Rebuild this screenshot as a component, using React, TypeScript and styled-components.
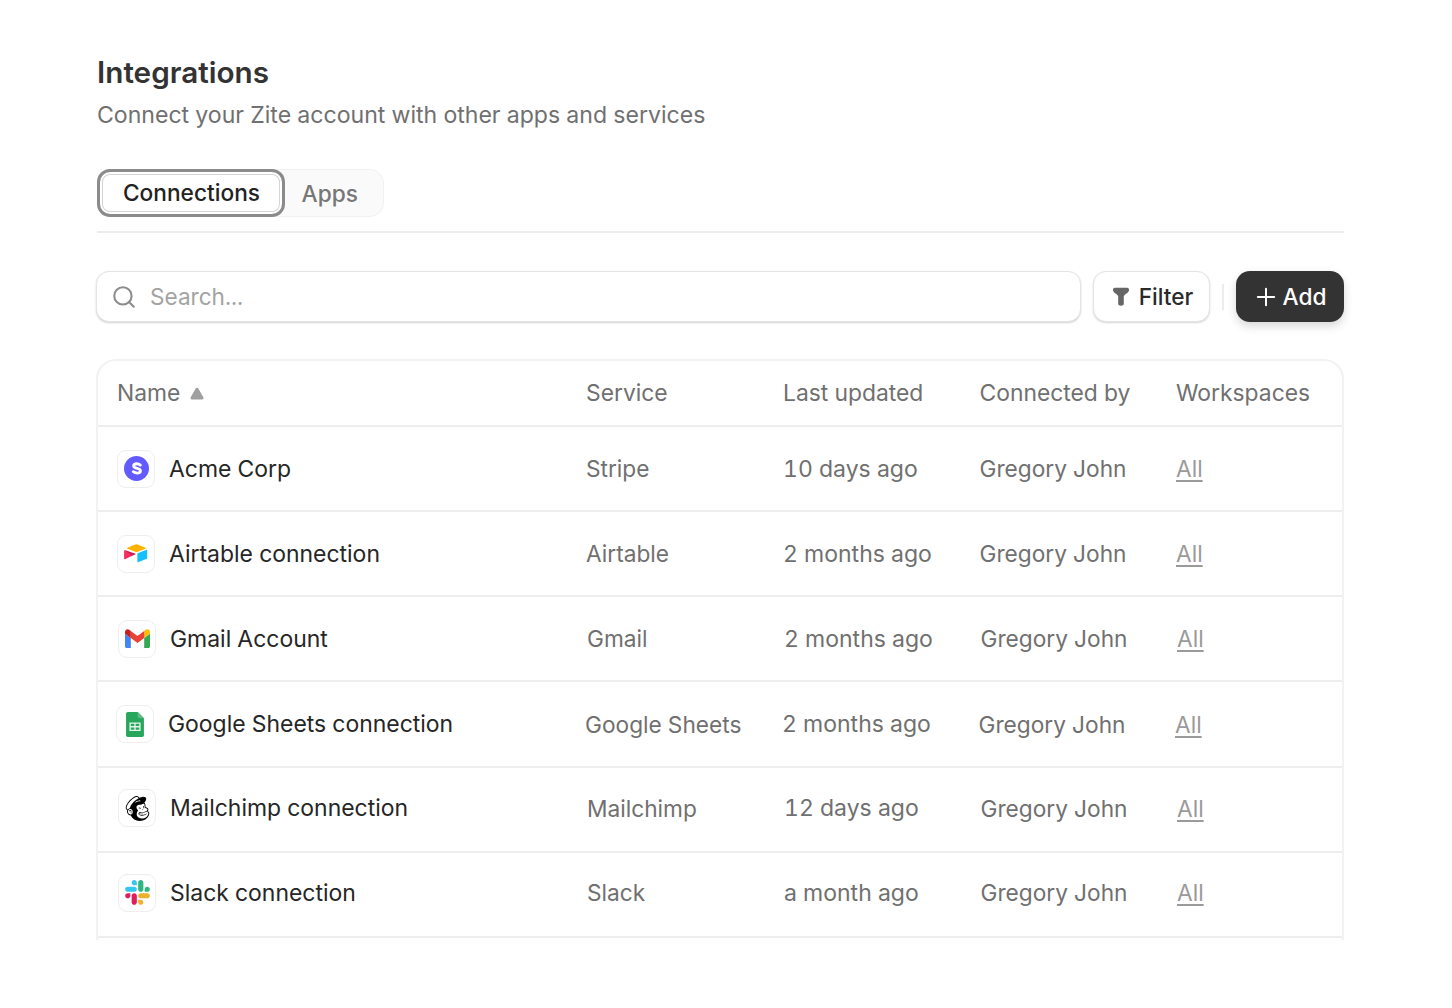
import React from 'react';
import styled, { createGlobalStyle } from 'styled-components';
import { Search, Plus } from 'lucide-react';
import { SiMailchimp } from 'react-icons/si';

const Global = createGlobalStyle`
  html, body { margin: 0; padding: 0; background: #fff; }
  body { font-family: Inter, "Liberation Sans", sans-serif; -webkit-font-smoothing: antialiased; font-variant-numeric: tabular-nums; }
`;

const Page = styled.div`
  width: 1452px; height: 1008px; box-sizing: border-box; overflow: hidden;
  padding: 53px 108px 0 97px; display: flex; flex-direction: column;
`;
const Title = styled.h1`
  margin: 0; font-size: 29.7px; line-height: 38px; font-weight: 600; color: #333;
`;
const Subtitle = styled.p`
  margin: 4px 0 0; font-size: 23.08px; line-height: 40px; font-weight: 400; color: #707070;
`;
const TabBar = styled.div`
  margin-top: 34px; padding-bottom: 14px; border-bottom: 2px solid #ececec; display: flex;
`;
const TabGroup = styled.div`
  display: flex; height: 48px; width: 287px; box-sizing: border-box;
  background: #fafafa; border: 1.5px solid #f1f1f1; border-radius: 14px;
`;
const ActiveTab = styled.div`
  width: 188px; height: 48px; margin: -1.5px 0 0 -1.5px; padding-left: 2px; flex: none; box-sizing: border-box;
  display: flex; align-items: center; justify-content: center;
  background: #fff; border: 3px solid #8b8b8b; border-radius: 13px;
  box-shadow: inset 0 0 0 2px #fff, inset 0 0 0 3px #d4d4d4;
  font-size: 22.7px; font-weight: 500; color: #222;
`;
const Tab = styled.div`
  flex: 1; display: flex; align-items: center; justify-content: center; padding-right: 8px;
  font-size: 22.7px; font-weight: 500; color: #777;
`;
const Toolbar = styled.div`
  margin: 38px 0 0 -1px; display: flex; align-items: center; height: 51px;
`;
const SearchBox = styled.div`
  flex: none; width: 985px; height: 51px; box-sizing: border-box; display: flex; align-items: center;
  gap: 13px; padding-left: 14px; background: #fff; color: #8c8c8c;
  border: 1.5px solid #e4e4e4; border-radius: 13px; box-shadow: 0 1px 2px rgba(0,0,0,.18);
`;
const Placeholder = styled.span`
  font-size: 22.6px; color: #a3a3a3;
`;
const FilterButton = styled.div`
  flex: none; margin-left: 12px; width: 117px; height: 51px; box-sizing: border-box; padding-left: 2px;
  display: flex; align-items: center; justify-content: center; gap: 9px;
  background: #fff; border: 1.5px solid #e4e4e4; border-radius: 13px; box-shadow: 0 1px 2px rgba(0,0,0,.16);
  font-size: 22.6px; font-weight: 500; color: #2a2a2a;
`;
const ToolDivider = styled.div`
  flex: none; width: 2px; height: 26px; margin: 0 12px; background: #ececec;
`;
const AddButton = styled.div`
  flex: none; width: 108px; height: 51px; box-sizing: border-box; padding-right: 2px;
  display: flex; align-items: center; justify-content: center; gap: 3px;
  background: #333; color: #fff; border-radius: 14px; box-shadow: 0 4px 10px rgba(0,0,0,.16);
  font-size: 22.7px; font-weight: 500;
`;
const Table = styled.div`
  margin: 37px 0 0 -1px; height: 581px; box-sizing: border-box; overflow: hidden;
  border: 2px solid #f2f2f2; border-bottom: none; border-radius: 20px 20px 0 0;
`;
const columns = '469px 197px 196.500px 196.500px 1fr';
const HeadRow = styled.div`
  display: grid; grid-template-columns: ${columns}; align-items: center; height: 66px; box-sizing: border-box;
  padding-left: 19px; border-bottom: 2px solid #eeeeee;
  font-size: 22.85px; color: #707070;
`;
const HeadName = styled.div`
  display: flex; align-items: center; gap: 10px;
`;
const Row = styled.div<{ $nudge: number; $height: number; $lift: number }>`
  display: grid; grid-template-columns: ${columns}; align-items: center; height: ${p => p.$height}px; box-sizing: border-box;
  padding-left: ${p => 19 + p.$nudge}px; padding-bottom: ${p => p.$lift}px; border-bottom: 2px solid #eeeeee;
  font-size: 22.7px; color: #707070;
`;
const NameCell = styled.div`
  display: flex; align-items: center; gap: 14px; font-size: 22.95px; color: #262626;
`;
const UpdatedCell = styled.div`
  font-size: 23px;
`;
const IconBox = styled.div`
  width: 38px; height: 38px; flex: none; box-sizing: border-box; display: flex; align-items: center; justify-content: center;
  background: #fff; border: 1.5px solid #eeeeee; border-radius: 9px; color: #000;
`;
const AllLink = styled.a`
  color: #9a9a9a; text-decoration: underline; text-underline-offset: 3px; text-decoration-thickness: 1.5px;
`;

const Stripe = () => (
  <svg width="25" height="25" viewBox="0 0 26 26">
    <circle cx="13" cy="13" r="13" fill="#635bff" />
    <path d="M17 9.400c-1-.8-2.400-1.300-3.800-1.300-1.800 0-3.100.9-3.100 2.300 0 3.100 7 1.800 7 5 0 1.500-1.400 2.400-3.300 2.400-1.500 0-3-.6-4.100-1.500" fill="none" stroke="#fff" strokeWidth="3" strokeLinecap="round" />
  </svg>
);
const Airtable = () => (
  <svg width="25" height="23" viewBox="0 0 28 26">
    <path d="M12.500 2.800 3.700 6.400c-.5.200-.5.900 0 1.100l8.900 3.500c.9.300 1.900.3 2.700 0l8.900-3.500c.5-.2.500-.9 0-1.100l-8.900-3.600c-.9-.4-1.900-.4-2.800 0z" fill="#fcb400" />
    <path d="M15 13.400V22.300c0 .4.400.7.800.6l9.900-3.900c.3-.1.400-.3.400-.6V9.500c0-.4-.4-.7-.8-.6l-9.900 3.900c-.2.100-.4.300-.4.600z" fill="#18bfff" />
    <path d="M12.700 13.900 9.700 15.300 1 19.500c-.4.200-1-.1-1-.6V9.900c0-.2.100-.3.200-.4l.3-.2c.2-.1.400-.1.600 0l11.500 4.100c.5.100.5.400.1.500z" fill="#f82b60" />
    <path d="M12.700 13.900 9.200 15.600 1 9.200l.1-.1 11.500 4.200c.5.200.5.500.1.600z" fill="#a51e46" opacity=".55" />
  </svg>
);
const Gmail = () => (
  <svg width="25" height="20" viewBox="0 0 28 22">
    <path d="M2 21h4.500V10L0 5.200V19c0 1.100.9 2 2 2z" fill="#4285f4" />
    <path d="M21.500 21H26c1.100 0 2-.9 2-2V5.200L21.500 10z" fill="#34a853" />
    <path d="M21.500 2v8L28 5.200V3c0-2.500-2.800-3.900-4.800-2.400z" fill="#fbbc04" />
    <path d="M6.500 10V2L14 7.600 21.500 2v8L14 15.600z" fill="#ea4335" />
    <path d="M0 3v2.200L6.500 10V2L4.800.6C2.800-.9 0 .5 0 3z" fill="#c5221f" />
  </svg>
);
const Sheets = () => (
  <svg width="18" height="25" viewBox="0 0 20 28">
    <path d="M2 0h11l7 7v19a2 2 0 0 1-2 2H2a2 2 0 0 1-2-2V2a2 2 0 0 1 2-2z" fill="#27a65c" />
    <path d="M13 0l7 7h-5a2 2 0 0 1-2-2z" fill="#5fba88" />
    <path d="M4.500 12.500h11v8h-11zM4.500 16.500h11M10 12.500v8" fill="none" stroke="#e4f4ea" strokeWidth="1.500" />
  </svg>
);
const Slack = () => (
  <svg width="25" height="25" viewBox="0 0 127 127">
    <path d="M27.200 80c0 7.300-5.900 13.200-13.200 13.200S.8 87.300.8 80s5.900-13.200 13.200-13.200h13.200V80zm6.600 0c0-7.300 5.900-13.200 13.200-13.200s13.200 5.900 13.200 13.200v33c0 7.300-5.900 13.200-13.200 13.200s-13.200-5.900-13.200-13.200V80z" fill="#E01E5A" />
    <path d="M47 27c-7.300 0-13.200-5.900-13.200-13.200S39.700.6 47 .6s13.200 5.900 13.200 13.200V27H47zm0 6.700c7.300 0 13.200 5.900 13.200 13.200s-5.900 13.200-13.200 13.200H13.900C6.600 60.100.7 54.200.7 46.900s5.900-13.200 13.200-13.200H47z" fill="#36C5F0" />
    <path d="M99.900 46.900c0-7.300 5.900-13.200 13.200-13.200s13.200 5.900 13.200 13.200-5.900 13.200-13.200 13.200H99.900V46.900zm-6.600 0c0 7.300-5.900 13.200-13.200 13.200s-13.200-5.900-13.200-13.200V13.800C66.900 6.500 72.800.6 80.100.6s13.200 5.900 13.200 13.200v33.100z" fill="#2EB67D" />
    <path d="M80.100 99.800c7.300 0 13.200 5.900 13.200 13.200s-5.900 13.200-13.200 13.200-13.200-5.900-13.200-13.200V99.800h13.200zm0-6.600c-7.300 0-13.200-5.900-13.200-13.200s5.900-13.200 13.200-13.200h33.100c7.300 0 13.200 5.900 13.200 13.200s-5.900 13.200-13.200 13.200H80.100z" fill="#ECB22E" />
  </svg>
);
const Funnel = () => (
  <svg width="18" height="19" viewBox="0 0 18 19">
    <path d="M3 .8h12c1.600 0 2.600 1.700 1.800 3.100l-1 1.600c-.4.600-1 1-1.700 1.100l-2.300 2.300v7.900c0 1.600-1.300 1.900-2.800 1.900s-2.800-.3-2.800-1.900V8.900L3.900 6.600c-.7-.1-1.300-.5-1.700-1.100l-1-1.600C.4 2.500 1.400.8 3 .8z" fill="#666" />
  </svg>
);
const SortUp = () => (
  <svg width="14" height="13" viewBox="0 0 14 13">
    <path d="M7 2.200 12 11H2z" fill="#a0a0a0" stroke="#a0a0a0" strokeWidth="3" strokeLinejoin="round" />
  </svg>
);

const rows = [
  { name: 'Acme Corp', service: 'Stripe', updated: '10 days ago', icon: <Stripe />, nudge: 0, height: 85, lift: 0 },
  { name: 'Airtable connection', service: 'Airtable', updated: '2 months ago', icon: <Airtable />, nudge: 0, height: 85, lift: 0 },
  { name: 'Gmail Account', service: 'Gmail', updated: '2 months ago', icon: <Gmail />, nudge: 1, height: 85, lift: 0 },
  { name: 'Google Sheets connection', service: 'Google Sheets', updated: '2 months ago', icon: <Sheets />, nudge: -1, height: 86, lift: 0 },
  { name: 'Mailchimp connection', service: 'Mailchimp', updated: '12 days ago', icon: <SiMailchimp size={25} />, nudge: 1, height: 85, lift: 3 },
  { name: 'Slack connection', service: 'Slack', updated: 'a month ago', icon: <Slack />, nudge: 1, height: 85, lift: 4 },
];

export default function App() {
  return (
    <Page>
      <Global />
      <Title>Integrations</Title>
      <Subtitle>Connect your Zite account with other apps and services</Subtitle>
      <TabBar>
        <TabGroup>
          <ActiveTab>Connections</ActiveTab>
          <Tab>Apps</Tab>
        </TabGroup>
      </TabBar>
      <Toolbar>
        <SearchBox>
          <Search size={26} strokeWidth={1.9} />
          <Placeholder>Search...</Placeholder>
        </SearchBox>
        <FilterButton><Funnel />Filter</FilterButton>
        <ToolDivider />
        <AddButton><Plus size={28} strokeWidth={1.7} />Add</AddButton>
      </Toolbar>
      <Table>
        <HeadRow>
          <HeadName>Name <SortUp /></HeadName>
          <div>Service</div>
          <div>Last updated</div>
          <div>Connected by</div>
          <div>Workspaces</div>
        </HeadRow>
        {rows.map(r => (
          <Row key={r.name} $nudge={r.nudge} $height={r.height} $lift={r.lift}>
            <NameCell><IconBox>{r.icon}</IconBox>{r.name}</NameCell>
            <div>{r.service}</div>
            <UpdatedCell>{r.updated}</UpdatedCell>
            <div>Gregory John</div>
            <div><AllLink>All</AllLink></div>
          </Row>
        ))}
      </Table>
    </Page>
  );
}
